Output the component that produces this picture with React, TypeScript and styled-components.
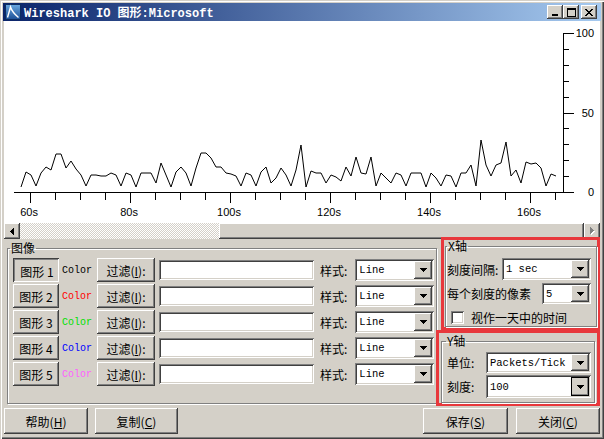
import styled, { createGlobalStyle } from 'styled-components';

const face = '#d4d0c8';
const raised = `inset -1px -1px #404040, inset 1px 1px #ffffff, inset -2px -2px #808080, inset 2px 2px ${face}`;
const sunken = `inset 1px 1px #808080, inset -1px -1px #ffffff, inset 2px 2px #404040, inset -2px -2px ${face}`;
const pressed = `inset 1px 1px #404040, inset -1px -1px #ffffff, inset 2px 2px #808080, inset -2px -2px ${face}`;
const cjk = `"Noto Sans CJK SC", "Liberation Sans", sans-serif`;
const mono = `"Liberation Mono", "Noto Sans CJK SC", monospace`;

const GlobalStyle = createGlobalStyle`
  html, body { margin: 0; padding: 0; background: ${face}; }
  body { font-family: ${cjk}; font-size: 12px; color: #000; }
  * { box-sizing: border-box; }
`;

// y pixel of each sample, one sample every 5px starting at x=21
const samples = [
  187, 172, 175, 186, 173, 167, 170, 154, 154, 168, 161, 169, 175, 186, 175, 175, 176, 176, 173, 175,
  186, 173, 175, 187, 173, 173, 173, 183, 163, 175, 187, 172, 167, 173, 186, 168, 153, 153, 158, 167,
  167, 173, 174, 176, 186, 173, 175, 186, 172, 167, 183, 178, 168, 175, 186, 170, 145, 187, 171, 173,
  173, 183, 175, 177, 181, 167, 176, 157, 173, 174, 157, 186, 173, 178, 183, 173, 175, 186, 173, 173,
  173, 187, 173, 178, 186, 175, 176, 187, 173, 173, 165, 186, 140, 165, 176, 165, 163, 142, 176, 170,
  183, 162, 164, 163, 168, 186, 174, 176,
];

const graphs = [
  { n: 1, color: '#000000', on: true },
  { n: 2, color: '#ff0000', on: false },
  { n: 3, color: '#00e000', on: false },
  { n: 4, color: '#0000ff', on: false },
  { n: 5, color: '#ff60ff', on: false },
];

const Window = styled.div`
  width: 604px;
  height: 439px;
  padding: 3px 3px 0;
  display: flex;
  flex-direction: column;
  overflow: hidden;
  background: ${face};
  box-shadow: inset 1px 1px ${face}, inset 2px 2px #ffffff, inset -1px -1px #404040, inset -2px -2px #808080;
`;

const TitleBar = styled.div`
  flex: none;
  height: 18px;
  display: flex;
  align-items: center;
  padding: 0 4px 0 2px;
  background: linear-gradient(to right, #0a246a, #a6caf0);
`;

const TitleText = styled.span`
  margin-left: 3px;
  flex: 1;
  color: #ffffff;
  font-family: ${mono};
  font-size: 12px;
  font-weight: bold;
  white-space: nowrap;
`;

const CaptionButton = styled.div<{ $gap?: boolean }>`
  width: 16px;
  height: 14px;
  margin-left: ${(p) => (p.$gap ? '2px' : '0')};
  display: flex;
  align-items: center;
  justify-content: center;
  background: ${face};
  box-shadow: ${raised};
`;

const Chart = styled.div`
  flex: none;
  height: 202px;
  margin: 0 1px;
  background: #ffffff;
`;

const ScrollBar = styled.div`
  flex: none;
  height: 16px;
  margin: 0 1px;
  display: flex;
`;

const ScrollArrow = styled.div`
  width: 16px;
  height: 16px;
  display: flex;
  align-items: center;
  justify-content: center;
  background: ${face};
  box-shadow: ${raised};
`;

const ScrollTrack = styled.div`
  width: 199px;
  background: repeating-conic-gradient(#ffffff 0 25%, ${face} 0 50%) 0 0 / 2px 2px;
`;

const ScrollThumb = styled.div`
  flex: 1;
  background: ${face};
  box-shadow: ${raised};
`;

const Controls = styled.div`
  flex: none;
  height: 169px;
  padding-left: 4px;
  display: flex;
  align-items: flex-start;
`;

const GroupBox = styled.fieldset`
  margin: 0;
  padding: 0;
  min-inline-size: 0;
  border: 1px solid #808080;
  box-shadow: inset 1px 1px #ffffff, 1px 1px #ffffff;
`;

const GroupTitle = styled.legend`
  margin-left: 0;
  padding: 0 1px;
  font-size: 12px;
  line-height: 12px;
`;

const GraphGroup = styled(GroupBox)`
  margin-top: 2px;
  width: 430px;
  height: 163px;
  padding: 3px 0 0 5px;
  display: flex;
  flex-direction: column;
  gap: 2px;

  ${GroupTitle} {
    line-height: 14px;
    margin-left: -3px;
  }
`;

const GraphRow = styled.div`
  height: 24px;
  display: flex;
  align-items: center;
`;

const PushButton = styled.button<{ $w: number; $h?: number; $down?: boolean }>`
  flex: none;
  width: ${(p) => p.$w}px;
  height: ${(p) => p.$h ?? 24}px;
  padding: ${(p) => (p.$down ? '2px 0 0 2px' : '0')};
  border: 0;
  display: flex;
  align-items: center;
  justify-content: center;
  background: ${face};
  box-shadow: ${(p) => (p.$down ? pressed : raised)};
  font-family: ${cjk};
  font-size: 12px;
  color: #000000;
  white-space: nowrap;
`;

const Accel = styled.span`
  text-decoration: underline;
`;

const ColorLabel = styled.span<{ $color: string }>`
  width: 38px;
  padding-left: 3px;
  color: ${(p) => p.$color};
  font-family: ${mono};
  font-size: 10px;
`;

const TextField = styled.div`
  width: 155px;
  height: 20px;
  margin-left: 4px;
  background: #ffffff;
  box-shadow: ${sunken};
`;

const FieldLabel = styled.span<{ $ml?: number }>`
  flex: none;
  margin-left: ${(p) => p.$ml ?? 0}px;
  white-space: nowrap;
`;

const Combo = styled.div<{ $w: number; $h: number; $ml?: number }>`
  flex: none;
  width: ${(p) => p.$w}px;
  height: ${(p) => p.$h}px;
  margin-left: ${(p) => (p.$ml === undefined ? 'auto' : `${p.$ml}px`)};
  padding: 2px;
  display: flex;
  background: #ffffff;
  box-shadow: ${sunken};
`;

const ComboText = styled.span`
  flex: 1;
  padding-left: 2px;
  display: flex;
  align-items: center;
  font-family: ${mono};
  font-size: 10.5px;
  white-space: nowrap;
`;

const DropButton = styled.div<{ $focus?: boolean }>`
  width: 18px;
  display: flex;
  align-items: center;
  justify-content: center;
  background: ${face};
  box-shadow: ${(p) => (p.$focus ? `inset 0 0 0 1px #000000, ${raised}` : raised)};
`;

const SideColumn = styled.div`
  margin-top: -2px;
  margin-left: 4px;
  display: flex;
  flex-direction: column;
`;

const Highlight = styled.div<{ $w: number; $h: number; $ml?: number }>`
  width: ${(p) => p.$w}px;
  height: ${(p) => p.$h}px;
  margin-left: ${(p) => p.$ml ?? 0}px;
  border: 3px solid #e8383c;
`;

const AxisRow = styled.div<{ $h: number; $mt: number }>`
  height: ${(p) => p.$h}px;
  margin-top: ${(p) => p.$mt}px;
  display: flex;
  align-items: center;
`;

const XGroup = styled(GroupBox)`
  margin-left: 1px;
  width: 152px;
  height: 87px;
  padding: 0 5px 0 1px;
`;

const YGroup = styled(GroupBox)`
  margin: 2px 0 0 2px;
  width: 154px;
  height: 68px;
  padding: 0 3px 0 5px;

  ${GroupTitle} {
    margin-left: -1px;
  }
`;

const CheckBox = styled.span`
  width: 13px;
  height: 13px;
  margin: 0 7px 0 4px;
  background: #ffffff;
  box-shadow: ${sunken};
`;

const Footer = styled.div`
  flex: none;
  height: 26px;
  padding: 0 1px;
  display: flex;
  gap: 7px;
`;

const Spacer = styled.div`
  flex: 1;
`;

const DownArrow = () => (
  <svg width="7" height="4" shapeRendering="crispEdges">
    <path d="M0 0h7v1H0zM1 1h5v1H1zM2 2h3v1H2zM3 3h1v1H3z" fill="#000" />
  </svg>
);

const ComboBox = ({ w, h, ml, text, focus }: { w: number; h: number; ml?: number; text: string; focus?: boolean }) => (
  <Combo $w={w} $h={h} $ml={ml}>
    <ComboText>{text}</ComboText>
    <DropButton $focus={focus}>
      <DownArrow />
    </DropButton>
  </Combo>
);

const AppIcon = () => (
  <svg width="16" height="16" viewBox="0 0 16 16">
    <defs>
      <linearGradient id="ico" x1="0" y1="0" x2="0" y2="1">
        <stop offset="0" stopColor="#6aa8e0" />
        <stop offset="1" stopColor="#1c4f95" />
      </linearGradient>
    </defs>
    <rect x="0.5" y="0.5" width="15" height="15" fill="url(#ico)" stroke="#0c2c60" />
    <path d="M2.5 13.5 L5.5 3 Q7 8 13.5 13.5" fill="none" stroke="#ffffff" strokeWidth="1.4" />
  </svg>
);

const IOChart = () => {
  const points = samples.map((y, i) => `${21 + 5 * i},${y}`).join(' ');
  const yTicks = Array.from({ length: 11 }, (_, i) => i);
  const xTicks = Array.from({ length: 22 }, (_, i) => 30 + 25 * i).filter((x) => x < 563);
  return (
    <svg width="596" height="202" viewBox="4 21 596 202" fontFamily='"Liberation Sans", sans-serif' fontSize="11">
      <g stroke="#000" shapeRendering="crispEdges">
        <line x1="563.5" y1="33" x2="563.5" y2="193" />
        <line x1="14" y1="192.5" x2="564" y2="192.5" />
        {yTicks.map((v) => {
          const y = Math.round(192 - v * 15.9) + 0.5;
          return <line key={v} x1="563" y1={y} x2={v % 5 === 0 ? 574 : 569} y2={y} />;
        })}
        {xTicks.map((x, i) => (
          <line key={x} x1={x + 0.5} y1="192" x2={x + 0.5} y2={i % 4 === 0 ? 203 : 200} />
        ))}
      </g>
      <polyline points={points} fill="none" stroke="#000" strokeWidth="1" />
      <g textAnchor="end">
        <text x="594" y="37">100</text>
        <text x="594" y="117">50</text>
        <text x="594" y="196">0</text>
      </g>
      <g textAnchor="middle">
        {[60, 80, 100, 120, 140, 160].map((s, i) => (
          <text key={s} x={29 + 100 * i} y="216">
            {s}s
          </text>
        ))}
      </g>
    </svg>
  );
};

export default function App() {
  return (
    <>
      <GlobalStyle />
      <Window>
        <TitleBar>
          <AppIcon />
          <TitleText>Wireshark IO 图形:Microsoft</TitleText>
          <CaptionButton>
            <svg width="8" height="8" shapeRendering="crispEdges">
              <rect x="1" y="6" width="6" height="2" fill="#000" />
            </svg>
          </CaptionButton>
          <CaptionButton>
            <svg width="9" height="9" shapeRendering="crispEdges">
              <path d="M0 0h9v2H0zM0 2h1v7H0zM8 2h1v7H8zM0 8h9v1H0z" fill="#000" />
            </svg>
          </CaptionButton>
          <CaptionButton $gap>
            <svg width="8" height="7" shapeRendering="crispEdges">
              <path d="M0 0h2v1H0zM6 0h2v1H6zM1 1h2v1H1zM5 1h2v1H5zM2 2h4v1H2zM3 3h2v1H3zM2 4h4v1H2zM1 5h2v1H1zM5 5h2v1H5zM0 6h2v1H0zM6 6h2v1H6z" fill="#000" />
            </svg>
          </CaptionButton>
        </TitleBar>

        <Chart>
          <IOChart />
        </Chart>

        <ScrollBar>
          <ScrollArrow>
            <svg width="4" height="7" shapeRendering="crispEdges">
              <path d="M3 0h1v7H3zM2 1h1v5H2zM1 2h1v3H1zM0 3h1v1H0z" fill="#000" />
            </svg>
          </ScrollArrow>
          <ScrollTrack />
          <ScrollThumb />
          <ScrollArrow>
            <svg width="5" height="8" shapeRendering="crispEdges">
              <path d="M1 1h1v7H1zM2 2h1v5H2zM3 3h1v3H3zM4 4h1v1H4z" fill="#fff" />
              <path d="M0 0h1v7H0zM1 1h1v5H1zM2 2h1v3H2zM3 3h1v1H3z" fill="#808080" />
            </svg>
          </ScrollArrow>
        </ScrollBar>

        <Controls>
          <GraphGroup>
            <GroupTitle>图像</GroupTitle>
            {graphs.map((g) => (
              <GraphRow key={g.n}>
                <PushButton $w={46} $down={g.on}>
                  图形 {g.n}
                </PushButton>
                <ColorLabel $color={g.color}>Color</ColorLabel>
                <PushButton $w={58}>
                  过滤(<Accel>I</Accel>):
                </PushButton>
                <TextField />
                <FieldLabel $ml={6}>样式:</FieldLabel>
                <ComboBox w={79} h={22} ml={8} text="Line" />
              </GraphRow>
            ))}
          </GraphGroup>

          <SideColumn>
            <Highlight $w={159} $h={93}>
              <XGroup>
                <GroupTitle>X轴</GroupTitle>
                <AxisRow $h={22} $mt={6}>
                  <FieldLabel>刻度间隔:</FieldLabel>
                  <ComboBox w={89} h={22} text="1 sec" />
                </AxisRow>
                <AxisRow $h={21} $mt={3}>
                  <FieldLabel>每个刻度的像素</FieldLabel>
                  <ComboBox w={49} h={21} text="5" />
                </AxisRow>
                <AxisRow $h={13} $mt={7}>
                  <CheckBox />
                  <FieldLabel>视作一天中的时间</FieldLabel>
                </AxisRow>
              </XGroup>
            </Highlight>
            <Highlight $w={164} $h={76} $ml={-5}>
              <YGroup>
                <GroupTitle>Y轴</GroupTitle>
                <AxisRow $h={21} $mt={5}>
                  <FieldLabel>单位:</FieldLabel>
                  <ComboBox w={105} h={21} text="Packets/Tick" />
                </AxisRow>
                <AxisRow $h={23} $mt={2}>
                  <FieldLabel>刻度:</FieldLabel>
                  <ComboBox w={105} h={23} text="100" focus />
                </AxisRow>
              </YGroup>
            </Highlight>
          </SideColumn>
        </Controls>

        <Footer>
          <PushButton $w={84} $h={26}>
            帮助(<Accel>H</Accel>)
          </PushButton>
          <PushButton $w={83} $h={26}>
            复制(<Accel>C</Accel>)
          </PushButton>
          <Spacer />
          <PushButton $w={85} $h={26}>
            保存(<Accel>S</Accel>)
          </PushButton>
          <PushButton $w={84} $h={26} style={{ marginLeft: 1 }}>
            关闭(<Accel>C</Accel>)
          </PushButton>
        </Footer>
      </Window>
    </>
  );
}
